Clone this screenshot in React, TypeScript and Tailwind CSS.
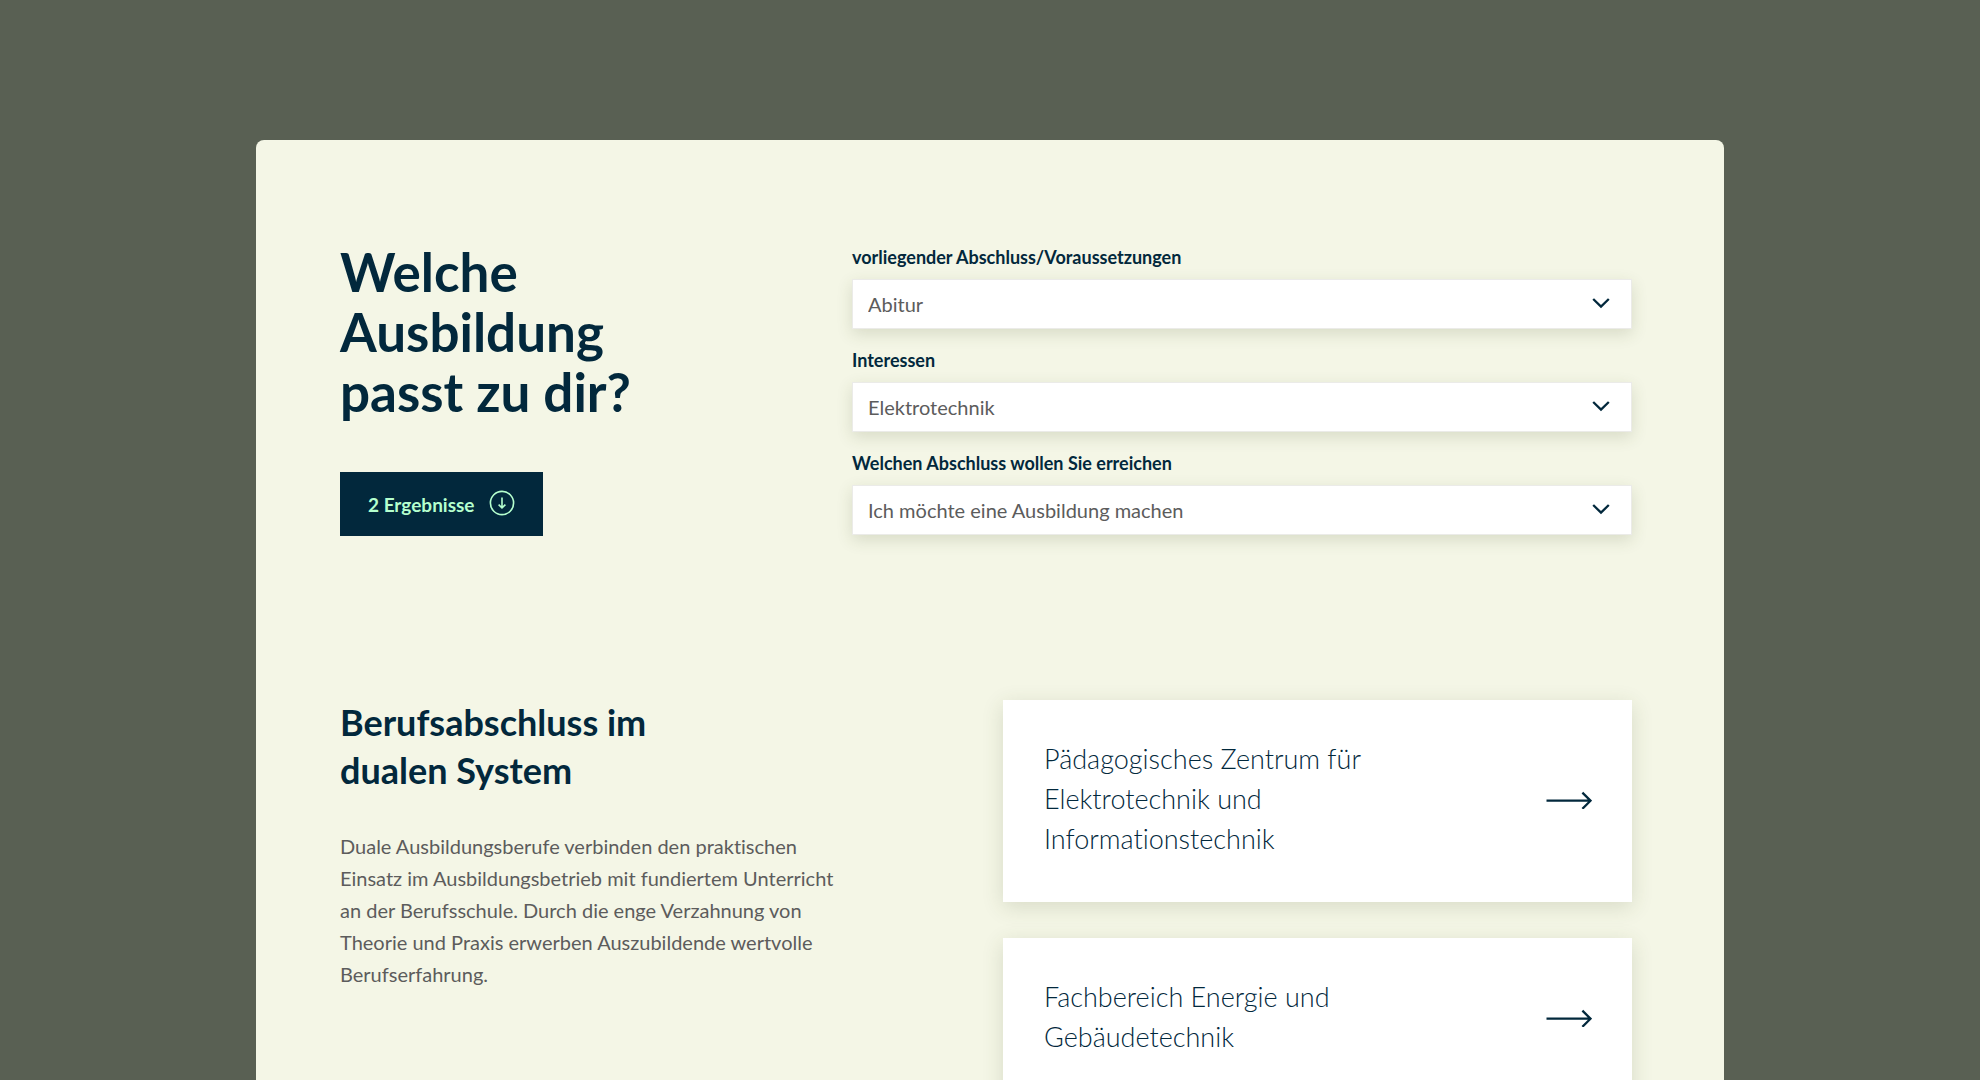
import { useState } from "react";

type SelectField = {
  id: string;
  label: string;
  options: string[];
};

const FIELDS: SelectField[] = [
  {
    id: "abschluss",
    label: "vorliegender Abschluss/Voraussetzungen",
    options: ["Abitur", "Fachabitur", "Realschulabschluss", "Hauptschulabschluss"],
  },
  {
    id: "interessen",
    label: "Interessen",
    options: ["Elektrotechnik", "Informationstechnik", "Gebäudetechnik"],
  },
  {
    id: "ziel",
    label: "Welchen Abschluss wollen Sie erreichen",
    options: ["Ich möchte eine Ausbildung machen", "Ich möchte studieren"],
  },
];

const RESULTS = [
  "Pädagogisches Zentrum für Elektrotechnik und Informationstechnik",
  "Fachbereich Energie und Gebäudetechnik",
];

function ChevronIcon() {
  return (
    <svg viewBox="0 0 18 12" className="pointer-events-none absolute top-[18px] right-[22px] h-3 w-[18px]" fill="none" aria-hidden="true">
      <path d="M1.2 2 9 9.6 16.8 2" stroke="#02283c" strokeWidth="2.3" />
    </svg>
  );
}

function ArrowIcon() {
  return (
    <svg viewBox="0 0 46 20" className="h-5 w-[46px] shrink-0" fill="none" aria-hidden="true">
      <path d="M.5 11.7H44.5M36.4 3.6l8.1 8.1-8.1 8.1" stroke="#02283c" strokeWidth="2.3" />
    </svg>
  );
}

function DownCircleIcon() {
  return (
    <svg viewBox="0 0 26 26" className="-mt-1 size-[26px]" fill="none" stroke="currentColor" aria-hidden="true">
      <circle cx="13" cy="13" r="11.6" strokeWidth="1.6" />
      <path d="M13 7.6v10M9.6 14.6l3.4 3.2 3.4-3.2" strokeWidth="1.6" />
    </svg>
  );
}

function SelectRow({ field }: { field: SelectField }) {
  const [value, setValue] = useState(field.options[0]);

  return (
    <div>
      <label htmlFor={field.id} className="block text-lg leading-6 font-bold">
        {field.label}
      </label>
      <div className="relative mt-2.5">
        <select
          id={field.id}
          value={value}
          onChange={(e) => setValue(e.target.value)}
          className="block h-[50px] w-full appearance-none border border-[#ebebe8] bg-white pr-14 pl-[15px] text-xl text-[#5c5c5c] shadow-[0_5px_16px_rgba(70,80,40,0.16)]"
        >
          {field.options.map((option) => (
            <option key={option}>{option}</option>
          ))}
        </select>
        <ChevronIcon />
      </div>
    </div>
  );
}

export default function App() {
  return (
    <main className="flex min-h-screen flex-col bg-[#596053] px-6 pt-[140px] font-['Lato',sans-serif] text-[#02283c] [font-variant-ligatures:none]">
      <div className="mx-auto w-full max-w-[1468px] flex-1 rounded-t-lg bg-[#f4f6e6] pt-[102px] pr-[92px] pl-[84px]">
        <section className="grid grid-cols-[512fr_780fr]">
          <div>
            <h1 className="text-[53px] leading-[60px] font-bold">
              Welche
              <br />
              Ausbildung
              <br />
              passt zu dir?
            </h1>
            <button type="button" className="mt-[50px] flex h-16 items-center gap-3.5 bg-[#02283c] px-7 pt-0.5 text-[19px] font-bold text-[#b5ffce]">
              2 Ergebnisse
              <DownCircleIcon />
            </button>
          </div>
          <form className="flex flex-col gap-[19px] pt-[3px]">
            {FIELDS.map((field) => (
              <SelectRow key={field.id} field={field} />
            ))}
          </form>
        </section>

        <section className="mt-[162px] grid grid-cols-[663fr_629fr]">
          <div>
            <h2 className="text-[36px] leading-[48px] font-bold">
              Berufsabschluss im
              <br />
              dualen System
            </h2>
            <p className="mt-9 max-w-[510px] text-xl leading-8 text-[#5c5c5c]">
              Duale Ausbildungsberufe verbinden den praktischen Einsatz im Ausbildungsbetrieb mit fundiertem Unterricht
              an der Berufsschule. Durch die enge Verzahnung von Theorie und Praxis erwerben Auszubildende wertvolle
              Berufserfahrung.
            </p>
          </div>
          <div className="flex flex-col gap-9 pt-0.5">
            {RESULTS.map((title) => (
              <a
                key={title}
                href="#"
                className="flex items-center justify-between bg-white pt-[39px] pr-10 pb-[43px] pl-[41px] shadow-[0_5px_20px_rgba(70,80,40,0.16)]"
              >
                <span className="max-w-[340px] text-[27px] leading-10 font-light">{title}</span>
                <ArrowIcon />
              </a>
            ))}
          </div>
        </section>
      </div>
    </main>
  );
}
